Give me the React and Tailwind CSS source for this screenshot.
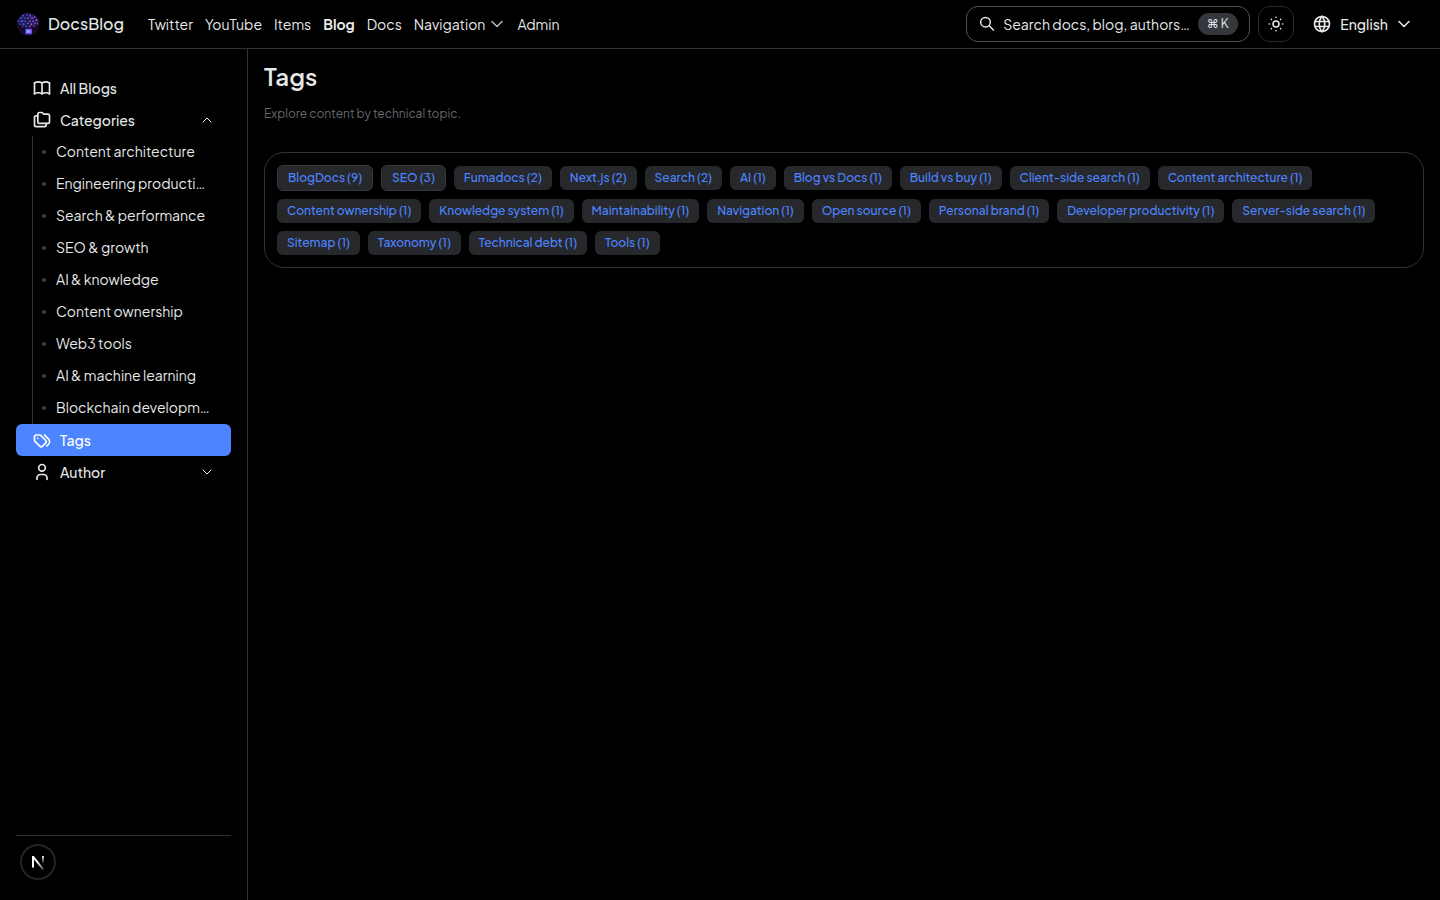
import { TbFolders, TbTags, TbUser, TbBook, TbWorld } from "react-icons/tb";
import { ChevronDown, ChevronUp } from "lucide-react";

const navLinks = ["Twitter", "YouTube", "Items", "Blog", "Docs"];

const categories = [
  "Content architecture",
  "Engineering productivity",
  "Search & performance",
  "SEO & growth",
  "AI & knowledge",
  "Content ownership",
  "Web3 tools",
  "AI & machine learning",
  "Blockchain development",
];

const tags = [
  ["BlogDocs", 9],
  ["SEO", 3],
  ["Fumadocs", 2],
  ["Next.js", 2],
  ["Search", 2],
  ["AI", 1],
  ["Blog vs Docs", 1],
  ["Build vs buy", 1],
  ["Client-side search", 1],
  ["Content architecture", 1],
  ["Content ownership", 1],
  ["Knowledge system", 1],
  ["Maintainability", 1],
  ["Navigation", 1],
  ["Open source", 1],
  ["Personal brand", 1],
  ["Developer productivity", 1],
  ["Server-side search", 1],
  ["Sitemap", 1],
  ["Taxonomy", 1],
  ["Technical debt", 1],
  ["Tools", 1],
];

const nodes = [
  [5, 6, "#2f5fd0"], [7, 3.5, "#3a6ae0"], [9, 6, "#2b4fae"], [11, 2.5, "#4a54c8"], [2.5, 9, "#2757c0"],
  [6, 9, "#4f80f0"], [9, 9, "#3a49b4"], [12, 6, "#6a50d0"], [14, 3.5, "#8a50d8"], [16, 6, "#a35ae8"],
  [18.5, 5, "#8f4cc8"], [20.5, 8, "#b66af0"], [17, 9, "#9150d0"], [14, 9, "#7a48c8"], [12, 11, "#6a4cc4"],
  [4, 12, "#2d50b4"], [7.5, 12, "#4f66d8"], [15.5, 12, "#a65adc"], [19, 11, "#8a48c0"], [21.5, 11.5, "#783ea8"],
  [10, 14, "#3c48a8"], [14, 14, "#7c48c0"], [18, 14, "#6a3ca0"], [6.5, 14.5, "#2a4aa0"],
];

function Logo() {
  return (
    <svg viewBox="0 0 24 24" className="size-6" aria-hidden="true">
      <circle cx="12" cy="12" r="11.5" fill="#140a26" />
      <path d="M1.5 9.5C2.5 4 7 1.5 12 1.5S21.5 4 22.500 9.500c0 3.500-5 5-10.500 6.500-5-1.500-10.500-3-10.500-6.500Z" fill="#2a2370" opacity=".6" />
      {nodes.map(([x, y, c]) => (
        <rect key={`${x}-${y}`} x={x - 0.8} y={y - 0.8} width="1.7" height="1.7" rx=".5" fill={c} />
      ))}
      <rect x="9" y="16.5" width="7" height="6" rx=".6" fill="#4a2fd0" />
      <rect x="10.3" y="17.6" width="4.2" height="3.6" fill="#78a8ff" />
      <rect x="14.4" y="17.4" width="1.6" height="4" fill="#a04ae0" />
    </svg>
  );
}

function SearchIcon() {
  return (
    <svg viewBox="0 0 16 16" className="size-4 shrink-0" fill="none" stroke="currentColor" strokeWidth="1.5" strokeLinecap="round" aria-hidden="true">
      <circle cx="6.5" cy="6.2" r="4.8" />
      <path d="m10.200 9.800 4.200 4.200" />
    </svg>
  );
}

function WideChevron({ className }) {
  return (
    <svg viewBox="0 0 16 16" className={className} fill="none" stroke="currentColor" strokeWidth="1.5" strokeLinecap="round" strokeLinejoin="round" aria-hidden="true">
      <path d="m3 5.500 5 5 5-5" />
    </svg>
  );
}

function Sun() {
  return (
    <svg viewBox="0 0 16 16" className="size-4" fill="none" stroke="currentColor" strokeWidth="1.5" strokeLinecap="round" aria-hidden="true">
      <circle cx="8" cy="8" r="3" />
      <path d="M8 1.300v.2M8 14.500v.2M1.300 8h.2M14.500 8h.2M3.300 3.300l.1.1M12.600 12.600l.1.1M3.300 12.700l.1-.1M12.600 3.400l.1-.1" />
    </svg>
  );
}

function NextMark() {
  return (
    <svg viewBox="0 0 16 16" className="size-4" aria-hidden="true">
      <defs>
        <linearGradient id="diag" x1="8" y1="8" x2="13" y2="15" gradientUnits="userSpaceOnUse">
          <stop stopColor="#fff" />
          <stop offset="1" stopColor="#fff" stopOpacity="0.3" />
        </linearGradient>
        <linearGradient id="stem" x1="12" y1="2" x2="12" y2="10" gradientUnits="userSpaceOnUse">
          <stop stopColor="#fff" />
          <stop offset="1" stopColor="#fff" stopOpacity="0" />
        </linearGradient>
      </defs>
      <path d="M3 13.500V2" stroke="#fff" strokeWidth="2" />
      <path d="M3 2.500 13.300 15.500" stroke="url(#diag)" strokeWidth="2" />
      <path d="M13 2v8" stroke="url(#stem)" strokeWidth="1.800" />
    </svg>
  );
}

function SideLink({ icon: Icon, label, active }) {
  return (
    <a
      href="#"
      aria-current={active ? "page" : undefined}
      className={`flex h-8 items-center gap-2 rounded-md px-4 font-medium ${active ? "bg-[#4d84ff] text-white" : ""}`}
    >
      <Icon className="size-5" />
      {label}
    </a>
  );
}

function SideToggle({ icon: Icon, label, open }) {
  const Chevron = open ? ChevronUp : ChevronDown;
  return (
    <button type="button" aria-expanded={open} className="flex h-8 w-full items-center gap-2 px-4 font-medium">
      <Icon className="size-5" />
      <span className="flex-1 text-left">{label}</span>
      <Chevron className="size-4" strokeWidth={1.5} />
    </button>
  );
}

export default function App() {
  return (
    <div className="flex min-h-screen flex-col bg-black font-['Plus_Jakarta_Sans','Inter',sans-serif] text-sm text-[#e6e8ea]">
      <header className="flex h-[49px] items-center justify-between border-b border-[#2f3338] px-4">
        <div className="flex items-center gap-6">
          <a href="#" className="flex items-center gap-2 text-base font-medium">
            <Logo />
            DocsBlog
          </a>
          <nav className="flex items-center gap-3">
            {navLinks.map((label) => (
              <a key={label} href="#" className={label === "Blog" ? "font-bold" : ""}>
                {label}
              </a>
            ))}
            <button type="button" className="flex items-center gap-1">
              Navigation
              <WideChevron className="size-4 text-[#b4b7ba]" />
            </button>
            <a href="#">Admin</a>
          </nav>
        </div>
        <div className="flex items-center gap-2">
          <button type="button" className="flex h-9 w-[284px] items-center gap-2 rounded-xl border border-[#4b5157] px-3">
            <SearchIcon />
            <span className="flex-1 text-left whitespace-nowrap">Search docs, blog, authors…</span>
            <kbd className="flex h-[22px] w-10 shrink-0 items-center justify-center rounded-full bg-[#34383c] font-['Plus_Jakarta_Sans','Inter',sans-serif] text-xs">⌘ K</kbd>
          </button>
          <button type="button" aria-label="Toggle theme" className="flex size-9 items-center justify-center rounded-xl border border-[#2c2c2e]">
            <Sun />
          </button>
          <button type="button" className="flex h-9 items-center gap-2 pr-3 pl-2.5 font-medium">
            <TbWorld className="size-5" />
            English
            <WideChevron className="size-4" />
          </button>
        </div>
      </header>

      <div className="flex flex-1">
        <aside className="flex w-62 shrink-0 flex-col border-r border-[#2f3338] px-4 pt-[23px] pb-5">
          <nav className="flex-1">
            <SideLink icon={TbBook} label="All Blogs" />
            <SideToggle icon={TbFolders} label="Categories" open />
            <ul className="ml-4 border-l border-[#2f3338]">
              {categories.map((label) => (
                <li key={label}>
                  <a href="#" className="flex h-8 items-center gap-2.5 pr-5 pl-[9px]">
                    <span className="size-1 shrink-0 rounded-full bg-[#3b3f44]" />
                    <span className="truncate pb-0.5">{label}</span>
                  </a>
                </li>
              ))}
            </ul>
            <SideLink icon={TbTags} label="Tags" active />
            <SideToggle icon={TbUser} label="Author" open={false} />
          </nav>
          <div className="border-t border-[#2f3338] px-1 pt-2">
            <button type="button" aria-label="Open Next.js Dev Tools" className="flex size-9 items-center justify-center rounded-full border-2 border-[#242424]">
              <NextMark />
            </button>
          </div>
        </aside>

        <main className="min-w-0 flex-1 px-4 pt-[11px]">
          <h1 className="text-2xl font-semibold">Tags</h1>
          <p className="mt-[14px] text-xs text-[#66696d]">Explore content by technical topic.</p>
          <ul className="mt-[30px] flex flex-wrap items-center gap-2 rounded-[20px] border border-[#2f3338] p-3">
            {tags.map(([name, count]) => (
              <li key={name}>
                <a
                  href="#"
                  className={`flex items-center rounded-md bg-[#26282c] px-2.5 py-1 text-xs font-medium text-[#4d84ff] ${count > 2 ? "border border-[#34373c]" : ""}`}
                >
                  {name} ({count})
                </a>
              </li>
            ))}
          </ul>
        </main>
      </div>
    </div>
  );
}
